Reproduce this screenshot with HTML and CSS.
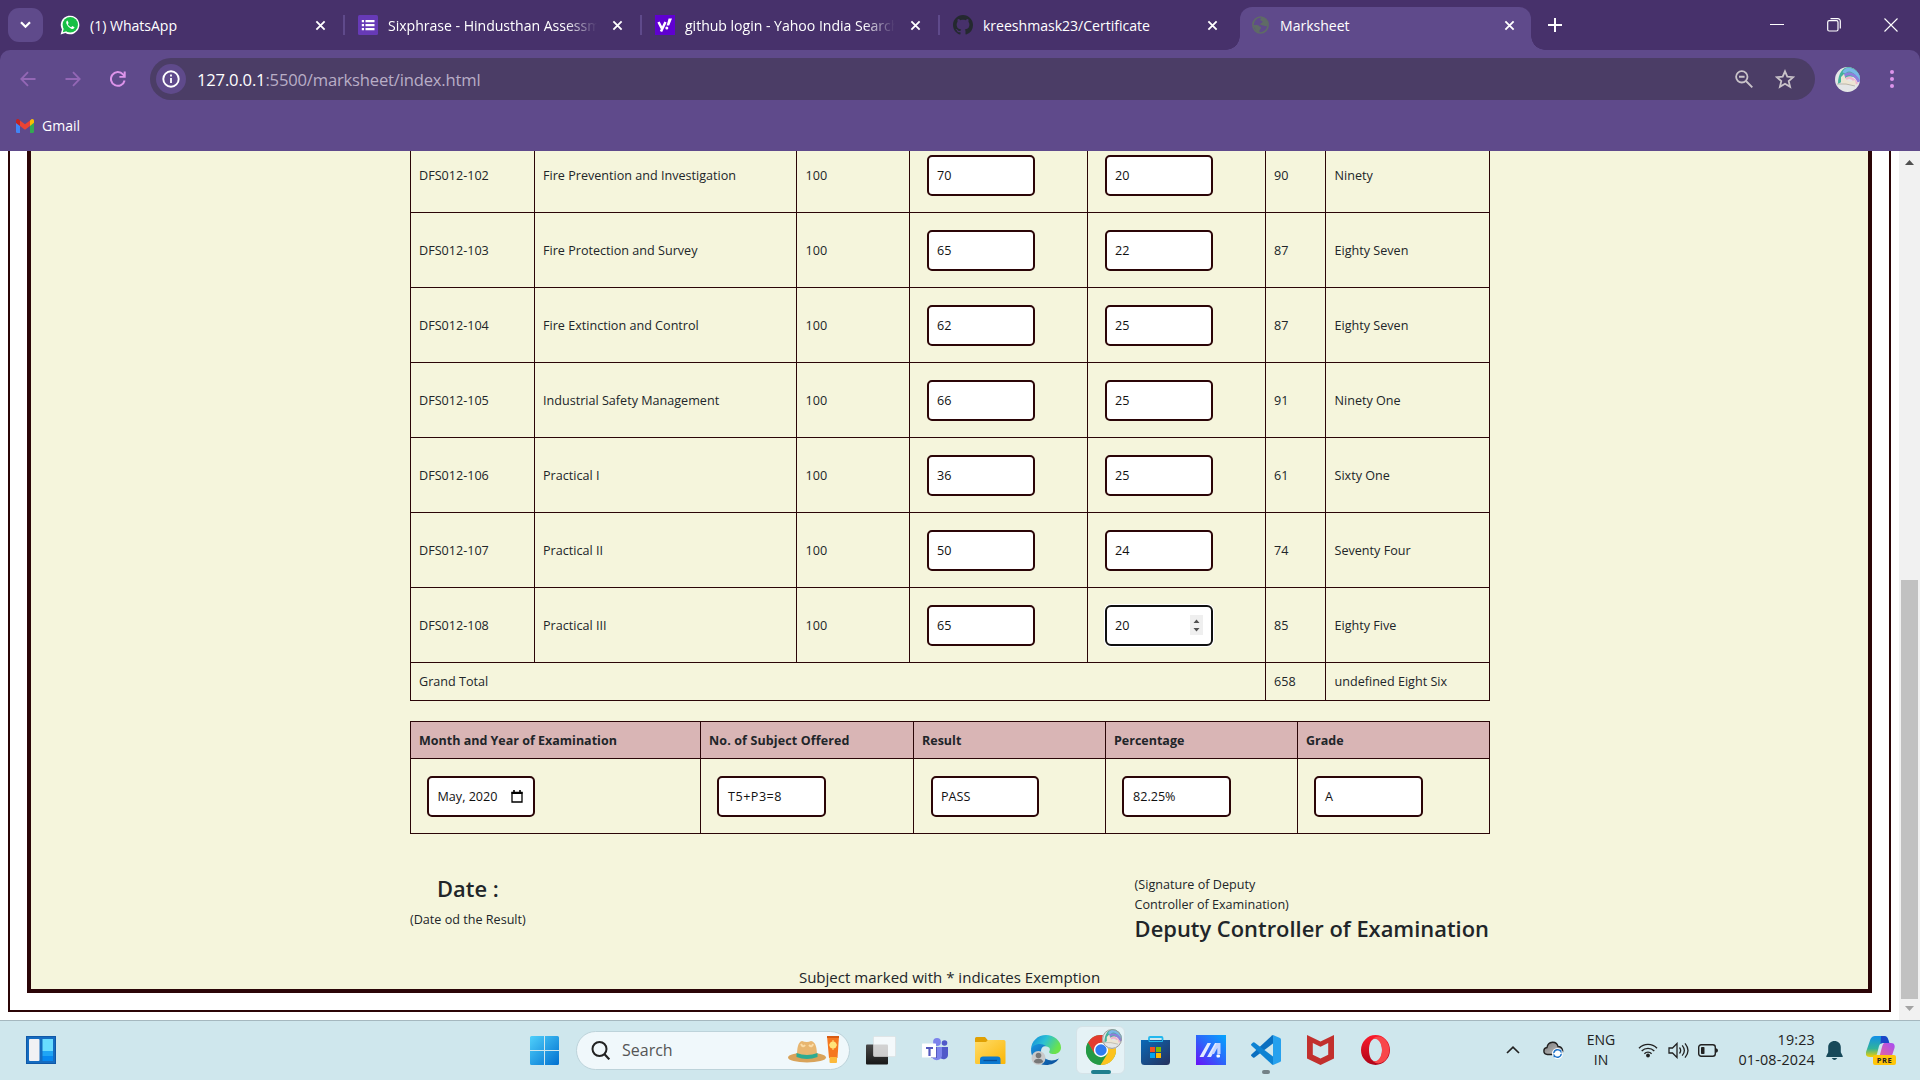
FILE: index.html
```html
<!DOCTYPE html>
<html lang="en">
<head>
<meta charset="utf-8">
<title>Marksheet</title>
<link rel="stylesheet" href="styles.css">
</head>
<body>
<svg width="0" height="0" class="defs" aria-hidden="true">
  <defs>
    <symbol id="close" viewBox="0 0 12 12"><path d="M1.5 1.5l9 9M10.5 1.5l-9 9" stroke="#fff" stroke-width="2" fill="none"/></symbol>
    <clipPath id="round"><circle cx="12.5" cy="12.5" r="12.5"/></clipPath>
    <symbol id="avatar" viewBox="0 0 25 25">
      <g clip-path="url(#round)">
        <rect width="25" height="25" fill="#e4e6e6"/>
        <path d="M3 17C3 6 8 0 14 0h11v14C19 9 13 7 8 14z" fill="#45b29b"/>
        <path d="M9 6C12 0 20 2 26 13" stroke="#79b6e8" stroke-width="3.500" fill="none"/>
        <path d="M9 9c5-5 12-1 15 6" stroke="#8f7ddc" stroke-width="3" fill="none"/>
        <path d="M11 12c4-3 8 0 11 5" stroke="#efb4cc" stroke-width="2.500" fill="none"/>
        <path d="M6 10l3-3 2 6 4 2 5-2 1 5H9l-3-3z" fill="#ece5d2"/>
        <path d="M2 17l9 0 9 2" stroke="#b9b6ad" fill="none"/>
      </g>
    </symbol>
    <linearGradient id="gWin" x1="0" y1="0" x2="1" y2="1"><stop offset="0" stop-color="#4fd0fb"/><stop offset="1" stop-color="#0070d0"/></linearGradient>
    <linearGradient id="gFold" x1="0" y1="0" x2="1" y2="1"><stop offset="0" stop-color="#ffdc69"/><stop offset="1" stop-color="#fbb606"/></linearGradient>
    <linearGradient id="gEdge" x1="0" y1="0" x2="1" y2=".4"><stop offset="0" stop-color="#1187dc"/><stop offset=".5" stop-color="#2bc0d4"/><stop offset="1" stop-color="#6be34b"/></linearGradient>
    <linearGradient id="gEdge2" x1="0" y1="0" x2="1" y2="1"><stop offset="0" stop-color="#1793e0"/><stop offset="1" stop-color="#0b4b96"/></linearGradient>
    <linearGradient id="gStore" x1="0" y1="0" x2="1" y2="1"><stop offset="0" stop-color="#0a69b8"/><stop offset="1" stop-color="#26315c"/></linearGradient>
    <linearGradient id="gAsus" x1="0" y1="1" x2="1" y2="0"><stop offset="0" stop-color="#6a0ff8"/><stop offset=".5" stop-color="#2c66fb"/><stop offset="1" stop-color="#05a6fd"/></linearGradient>
    <linearGradient id="gOpera" x1="0" y1="0" x2="0" y2="1"><stop offset="0" stop-color="#fb1b2d"/><stop offset="1" stop-color="#ad0418"/></linearGradient>
    <linearGradient id="gTask" x1="0" y1="0" x2="0" y2="1"><stop offset="0" stop-color="#484848"/><stop offset="1" stop-color="#181818"/></linearGradient>
    <linearGradient id="gPilotA" x1="0" y1="0" x2="0" y2="1"><stop offset="0" stop-color="#118fe8"/><stop offset=".6" stop-color="#31b39b"/><stop offset="1" stop-color="#f4d000"/></linearGradient>
    <linearGradient id="gPilotB" x1="1" y1="0" x2="0" y2="1"><stop offset="0" stop-color="#a64df5"/><stop offset="1" stop-color="#fb6b80"/></linearGradient>
    <linearGradient id="gCloud" x1="0" y1="0" x2="1" y2="1"><stop offset="0" stop-color="#777"/><stop offset="1" stop-color="#c9c9c9"/></linearGradient>
  </defs>
</svg>

<header class="browser">
  <div class="tabstrip">
    <div class="tab-search"><button class="tab-search-btn" aria-label="Search tabs"><svg width="11" height="8" viewBox="0 0 11 8"><path d="M1 1.2l4.5 4.6L10 1.2" stroke="#fff" stroke-width="2.2" fill="none"/></svg></button></div>
    <div class="tab">
      <svg width="20" height="20" viewBox="0 0 20 20"><path d="M.6 19.4L2 14.6A9.3 9.3 0 1 1 5.4 18z" fill="#fff"/><circle cx="10.3" cy="9.7" r="7.7" fill="#17bf45"/><path d="M2.8 17.2l1-3.6 2.6 2.6z" fill="#17bf45"/><path d="M7.4 5.4c-1.2.6-1.5 2-.8 3.7.9 2.300 2.900 4.100 5.100 4.800 1.300.4 2.600-.2 2.800-1.600l-2.200-1.200-1.100 1.200c-1.600-.6-2.600-1.600-3.400-3l.8-1.200z" fill="#fff"/></svg>
      <span class="tab-title">(1) WhatsApp</span>
      <svg class="x" width="11" height="11"><use href="#close"/></svg>
    </div>
    <div class="tab">
      <svg width="20" height="20" viewBox="0 0 20 20"><rect width="20" height="20" rx="1.500" fill="#673ab7"/><path d="M7.500 5h9v2.200h-9zM7.500 9h9v2.200h-9zM7.500 13h9v2.200h-9zM3.800 5H6v2.200H3.800zM3.800 9H6v2.200H3.800zM3.800 13H6v2.200H3.800z" fill="#fff"/></svg>
      <span class="tab-title fade">Sixphrase - Hindusthan Assessment</span>
      <svg class="x" width="11" height="11"><use href="#close"/></svg>
    </div>
    <div class="tab">
      <svg width="20" height="20" viewBox="0 0 20 20"><rect width="20" height="20" fill="#5f01d1"/><path d="M3.500 7l3.200 6.200M10.500 7L6 16.500" stroke="#fff" stroke-width="2.500" fill="none"/><path d="M13.600 3.500H17l-2.800 7h-2.600z" fill="#fff"/><circle cx="11.800" cy="12.900" r="1.500" fill="#fff"/></svg>
      <span class="tab-title fade">github login - Yahoo India Search</span>
      <svg class="x" width="11" height="11"><use href="#close"/></svg>
    </div>
    <div class="tab tab-github">
      <svg width="20" height="20" viewBox="0 0 16 16"><path fill="#24292f" d="M8 0C3.580 0 0 3.580 0 8c0 3.540 2.290 6.530 5.470 7.590.4.070.55-.17.55-.38 0-.19-.01-.82-.01-1.490-2.010.37-2.530-.49-2.690-.94-.09-.23-.48-.94-.82-1.130-.28-.15-.68-.52-.01-.53.63-.01 1.080.58 1.230.82.72 1.210 1.870.87 2.330.66.07-.52.28-.87.51-1.070-1.780-.2-3.640-.89-3.640-3.950 0-.87.31-1.590.82-2.150-.08-.2-.36-1.020.08-2.120 0 0 .67-.21 2.200.82.64-.18 1.320-.27 2-.27s1.360.09 2 .27c1.530-1.040 2.200-.82 2.200-.82.44 1.100.16 1.920.08 2.120.51.56.82 1.270.82 2.150 0 3.070-1.870 3.750-3.650 3.950.29.25.54.73.54 1.480 0 1.070-.01 1.930-.01 2.200 0 .21.15.46.55.38A8.010 8.010 0 0 0 16 8c0-4.420-3.580-8-8-8z"/></svg>
      <span class="tab-title">kreeshmask23/Certificate</span>
      <svg class="x" width="11" height="11"><use href="#close"/></svg>
    </div>
    <div class="tab tab-active">
      <svg width="17" height="18" viewBox="0 0 17 18"><ellipse cx="8.500" cy="9" rx="7.600" ry="8" fill="none" stroke="#5f6b66" stroke-width="1.700"/><path d="M10 1.500c-2.300 1-2.200 3.300 0 3.500 1.300.2.300 2-1 2.300-1.500.4-.6 1.900 1 1.900 2 0 3 1.500 5.500.8l.6-3.500L13 2.500zM1 9h4c2 0 2.200 1.900 4 2 .5 2-2 2.200-1.500 5.500l-3-1z" fill="#5f6b66"/></svg>
      <span class="tab-title">Marksheet</span>
      <svg class="x" width="11" height="11"><use href="#close"/></svg>
    </div>
    <div class="strip-end">
      <svg width="14" height="14" viewBox="0 0 14 14"><path d="M7 0v14M0 7h14" stroke="#fff" stroke-width="2"/></svg>
      <div class="window-controls">
        <svg width="14" height="14" viewBox="0 0 14 14"><path d="M0 6.500h14" stroke="#fff"/></svg>
        <svg width="14" height="14" viewBox="0 0 14 14"><rect x=".7" y="2.700" width="10.300" height="10.300" rx="1.500" fill="none" stroke="#fff" stroke-width="1.200"/><path d="M3.500.700h7.300a2.500 2.500 0 0 1 2.500 2.500v7.300" fill="none" stroke="#fff" stroke-width="1.200"/></svg>
        <svg width="14" height="14" viewBox="0 0 14 14"><path d="M.5.500l13 13M13.500.500l-13 13" stroke="#fff" stroke-width="1.100"/></svg>
      </div>
    </div>
  </div>

  <div class="toolbar">
    <div class="nav">
      <svg width="16" height="16" viewBox="0 0 16 16"><path d="M15.500 8H1.500M8 1.200L1.300 8 8 14.800" fill="none" stroke="#9367b5" stroke-width="1.800"/></svg>
      <svg width="16" height="16" viewBox="0 0 16 16"><path d="M.5 8h14M8 1.200L14.700 8 8 14.800" fill="none" stroke="#9367b5" stroke-width="1.800"/></svg>
      <svg width="16" height="16" viewBox="0 0 16 16"><path d="M14.600 9.500A6.900 6.900 0 1 1 13 3.300l1.500 1.700" fill="none" stroke="#dd94ea" stroke-width="2"/><path d="M15.700.500v6.300H9.400V4.900h4.300V.500z" fill="#dd94ea"/></svg>
    </div>
    <div class="omnibox">
      <span class="site-info"><svg width="18" height="18" viewBox="0 0 18 18"><circle cx="9" cy="9" r="7.700" fill="none" stroke="#fff" stroke-width="1.900"/><path d="M9 8v5M9 4.600v1.800" stroke="#fff" stroke-width="1.800"/></svg></span>
      <span class="url"><b>127.0.0.1</b>:5500/marksheet/index.html</span>
      <svg width="18" height="18" viewBox="0 0 18 18"><circle cx="6.800" cy="6.800" r="5.700" fill="none" stroke="#c9c3c9" stroke-width="1.800"/><path d="M4 6.800h5.600M11 11l6.300 6.300" stroke="#c9c3c9" stroke-width="1.900"/></svg>
      <svg width="20" height="20" viewBox="0 0 20 20"><path d="M10 2.300l2.300 5.400 5.900.5-4.500 3.900 1.400 5.700L10 14.800l-5.100 3 1.400-5.700-4.500-3.900 5.900-.5z" fill="none" stroke="#c9c3c9" stroke-width="1.800"/></svg>
    </div>
    <svg class="profile" width="25" height="25"><use href="#avatar"/></svg>
    <svg width="4" height="18" viewBox="0 0 4 18"><circle cx="2" cy="2" r="2" fill="#dd94ea"/><circle cx="2" cy="9" r="2" fill="#dd94ea"/><circle cx="2" cy="16" r="2" fill="#dd94ea"/></svg>
  </div>

  <div class="bookmarks">
    <svg width="18" height="14" viewBox="0 0 18 14"><path d="M0 3.500l4 3V14H1.200A1.200 1.200 0 0 1 0 12.800z" fill="#4285f4"/><path d="M18 3.500l-4 3V14h2.800a1.200 1.200 0 0 0 1.200-1.200z" fill="#34a853"/><path d="M14 1.400L15.200.400C16.400-.5 18 .3 18 1.800v2L14 7z" fill="#fbbc04"/><path d="M4 1.400l5 3.800 5-3.800V7L9 10.700 4 7z" fill="#ea4335"/><path d="M0 1.800C0 .3 1.600-.5 2.800.400L4 1.400V7L0 3.900z" fill="#c5221f"/></svg>
    <span>Gmail</span>
  </div>
</header>

<main class="viewport">
  <div class="page">
    <div class="sheet">
      <table class="marks">
        <colgroup><col class="c-code"><col class="c-subject"><col class="c-max"><col class="c-mark"><col class="c-mark"><col class="c-total"><col class="c-words"></colgroup>
        <tbody>
          <tr><td>DFS012-102</td><td>Fire Prevention and Investigation</td><td>100</td><td><span class="field">70</span></td><td><span class="field">20</span></td><td>90</td><td>Ninety</td></tr>
          <tr><td>DFS012-103</td><td>Fire Protection and Survey</td><td>100</td><td><span class="field">65</span></td><td><span class="field">22</span></td><td>87</td><td>Eighty Seven</td></tr>
          <tr><td>DFS012-104</td><td>Fire Extinction and Control</td><td>100</td><td><span class="field">62</span></td><td><span class="field">25</span></td><td>87</td><td>Eighty Seven</td></tr>
          <tr><td>DFS012-105</td><td>Industrial Safety Management</td><td>100</td><td><span class="field">66</span></td><td><span class="field">25</span></td><td>91</td><td>Ninety One</td></tr>
          <tr><td>DFS012-106</td><td>Practical I</td><td>100</td><td><span class="field">36</span></td><td><span class="field">25</span></td><td>61</td><td>Sixty One</td></tr>
          <tr><td>DFS012-107</td><td>Practical II</td><td>100</td><td><span class="field">50</span></td><td><span class="field">24</span></td><td>74</td><td>Seventy Four</td></tr>
          <tr><td>DFS012-108</td><td>Practical III</td><td>100</td><td><span class="field">65</span></td><td><span class="field focused">20<svg width="13" height="20" viewBox="0 0 13 20"><rect width="13" height="20" fill="#efefef"/><path d="M3.500 8l3-3.500 3 3.500zM3.500 13l3 3.500 3-3.500z" fill="#505050"/></svg></span></td><td>85</td><td>Eighty Five</td></tr>
          <tr class="grand"><td colspan="5">Grand Total</td><td>658</td><td>undefined Eight Six</td></tr>
        </tbody>
      </table>

      <table class="summary">
        <colgroup><col class="s-month"><col class="s-count"><col class="s-rest"><col class="s-rest"><col class="s-rest"></colgroup>
        <thead><tr><th>Month and Year of Examination</th><th class="spaced">No. of Subject Offered</th><th>Result</th><th>Percentage</th><th>Grade</th></tr></thead>
        <tbody>
          <tr>
            <td><span class="field month">May, 2020<svg width="12" height="13" viewBox="0 0 12 13"><path d="M1 2.500h10V12H1z" fill="none" stroke="#000" stroke-width="1.300"/><path d="M.5 2h11v2H.5zM2.200 0h1.600v2H2.200zM8.200 0h1.600v2H8.200z"/></svg></span></td>
            <td><span class="field code">T5+P3=8</span></td><td><span class="field result">PASS</span></td><td><span class="field">82.25%</span></td><td><span class="field">A</span></td>
          </tr>
        </tbody>
      </table>

      <div class="signatures">
        <div class="sign-date"><h4>Date :</h4><p>(Date od the Result)</p></div>
        <div class="sign-deputy"><p>(Signature of Deputy<br>Controller of Examination)</p><h4>Deputy Controller of Examination</h4></div>
      </div>
      <p class="exemption">Subject marked with * indicates Exemption</p>
    </div>
  </div>
  <div class="scrollbar">
    <svg width="9" height="5" viewBox="0 0 9 5"><path d="M0 5L4.500 0 9 5z" fill="#505050"/></svg>
    <div class="thumb"></div>
    <svg width="9" height="5" viewBox="0 0 9 5"><path d="M0 0l4.500 5L9 0z" fill="#a3a3a3"/></svg>
  </div>
</main>

<footer class="taskbar">
  <svg class="widgets" width="30" height="28" viewBox="0 0 30 28"><rect width="30" height="28" fill="#0e58a8"/><rect x="1" y="1" width="28" height="26" fill="#156cc0"/><rect x="3" y="3" width="10.500" height="22" rx="1" fill="#f1f1f4"/><rect x="16.500" y="3" width="10.500" height="12" fill="#69dcff"/><rect x="16.500" y="15" width="10.500" height="5" fill="#1fa5f5"/><rect x="16.500" y="20" width="10.500" height="5" fill="#0788ef"/></svg>

  <div class="apps">
    <svg class="start" width="29" height="29" viewBox="0 0 29 29"><path d="M1.500 0H14v14H0V1.500A1.500 1.500 0 0 1 1.500 0zM15 0h12.500A1.500 1.500 0 0 1 29 1.500V14H15zM0 15h14v14H1.500A1.500 1.500 0 0 1 0 27.500zM15 15h14v12.500a1.500 1.500 0 0 1-1.500 1.500H15z" fill="url(#gWin)"/></svg>
    <div class="search">
      <svg width="19" height="19" viewBox="0 0 19 19"><circle cx="8.500" cy="8" r="7" fill="none" stroke="#222" stroke-width="2"/><path d="M13.300 13l5 5.300" stroke="#222" stroke-width="2.200"/></svg>
      <span>Search</span>
      <svg width="52" height="28" viewBox="0 0 52 28">
        <ellipse cx="19" cy="21.500" rx="19" ry="5" fill="#d9a35a"/><path d="M9 20c0-8 1-14 5-15q5 2 9 0c5 1 6 7 6 15q-10 4-20 0z" fill="#e8b670"/><path d="M13 8q2 4 4 1M21 9q3 3 4-1" stroke="#fbdca6" stroke-width="2" fill="none"/><path d="M8.500 17q10.500 4 21 0v4q-10.500 4-21 0z" fill="#2cab92"/>
        <path d="M39 0h12l-1.500 22h-8.500z" fill="#f5771f"/><path d="M39 0h12v2H39z" fill="#d85b12"/><rect x="41.500" y="21" width="7.500" height="6" rx="1" fill="#fcb93a"/><circle cx="45" cy="9" r="3.500" fill="#ffe37a"/><path d="M45 4v10M41 9h8" stroke="#ffe37a" stroke-width="1"/>
      </svg>
    </div>
    <span class="app"><svg width="30" height="29" viewBox="0 0 30 29"><rect x="0" y="8.500" width="22" height="20" rx="1" fill="url(#gTask)"/><rect x="7.500" y=".5" width="22" height="20" rx="1" fill="#fff" fill-opacity=".76" stroke="#ddd" stroke-width=".6"/></svg></span>
    <span class="app"><svg width="27" height="24" viewBox="0 0 27 24"><circle cx="15" cy="4" r="3.900" fill="#7b83eb"/><circle cx="22.500" cy="5" r="2.800" fill="#5059c9"/><path d="M18 9h8v7.500a4.500 4.500 0 0 1-8 3z" fill="#5059c9"/><path d="M9.500 9H20v9a5.400 5.400 0 0 1-10.500 0z" fill="#7b83eb"/><path d="M9 9h6v11H9z" fill="#545abf"/><rect y="5.500" width="14" height="14" rx=".6" fill="#fff"/><path d="M4 9h7v2H8.600v7H6.400v-7H4z" fill="#5359be"/></svg></span>
    <span class="app"><svg width="31" height="28" viewBox="0 0 31 28"><path d="M0 2.500A1.500 1.500 0 0 1 1.500 1H10l3 3.500H29V12H0z" fill="#e0a003"/><path d="M0 6h11l2-2h16a2 2 0 0 1 1.500 1.500V27a1 1 0 0 1-1 1h-28A1.500 1.500 0 0 1 0 26.500z" fill="url(#gFold)"/><path d="M5 28v-4.500a3 3 0 0 1 3-3h14.500a3 3 0 0 1 3 3V28z" fill="#0b79d0"/><path d="M8.500 24.500h13.500" stroke="#074e97" stroke-width="1.300"/></svg></span>
    <span class="app"><svg width="30" height="30" viewBox="0 0 30 30"><path d="M0 15C0 6 7 0 15 0s15 6 15 12.500c0 4-3 6.500-7 6.500-4.500 0-5.500-1.500-4.500-3 1-2 .2-4-3-4.500C9 10.500 3 11 0 15z" fill="url(#gEdge)"/><path d="M0 15c1-6 10-8 15-4-5 0-6 5-4 9 3 5.500 10 7 17 3.500C25 28 20 30 15 30 6 30 0 23 0 15z" fill="url(#gEdge2)"/><circle cx="7.500" cy="23" r="7" fill="#c9cacb"/><circle cx="7.500" cy="20.500" r="2.800" fill="#777"/><path d="M2.800 27c0-4.500 9.400-4.500 9.400 0q-4.700 3-9.400 0z" fill="#777"/></svg></span>
    <span class="app running"><svg width="30" height="30" viewBox="0 0 30 30"><circle cx="15" cy="15" r="15" fill="#4caf50"/><path d="M2 7.500A15 15 0 0 0 15 30l6.500-11.200L15 15l-6.500 3.800z" fill="#249a46"/><path d="M28 7.500A15 15 0 0 1 14.500 30l7-11.200L22 8z" fill="#fcc31e"/><path d="M15 7.500h13A15 15 0 0 0 2 7.500l6.500 11z" fill="#e33b2e"/><circle cx="15" cy="15" r="7.200" fill="#fff"/><circle cx="15" cy="15" r="5.700" fill="#2f7cf0"/></svg><svg class="badge" width="20" height="20" viewBox="0 0 20 20"><use href="#avatar" width="20" height="20"/><circle cx="10" cy="10" r="9.400" fill="none" stroke="#999" stroke-width="1"/></svg></span>
    <span class="app"><svg width="29" height="29" viewBox="0 0 29 29"><path d="M8 5V2a1 1 0 0 1 1-1h11.500a1 1 0 0 1 1 1v3" fill="none" stroke="#22b8ee" stroke-width="1.800"/><path d="M0 4h29v21.500a3.500 3.500 0 0 1-3.500 3.500h-22A3.500 3.500 0 0 1 0 25.500z" fill="url(#gStore)"/><path d="M8 4v1.500h13.500V4" fill="none" stroke="#22b8ee" stroke-width="1"/><path d="M9 11h5v5H9z" fill="#f25022"/><path d="M15 11h5v5h-5z" fill="#7fba00"/><path d="M9 17h5v5H9z" fill="#00a4ef"/><path d="M15 17h5v5h-5z" fill="#ffb900"/></svg></span>
    <span class="app"><svg width="30" height="30" viewBox="0 0 30 30"><rect width="30" height="30" fill="url(#gAsus)"/><path d="M3.500 22L11.500 8h3.500L7.500 22zM11 22l8-14h3.500L15 22z" fill="#e3ebff"/><path d="M20.500 8h4v11h-3.200v-6L18 19h-3z" fill="#c4d4ff"/><rect x="20.500" y="19.500" width="3.500" height="3" rx="1" fill="#fff"/></svg></span>
    <span class="app idle"><svg width="30" height="30" viewBox="0 0 30 30"><path d="M22 0l7 3q1 .5 1 1.500v21q0 1-1 1.500l-7 3z" fill="#26a1ee"/><path d="M22 0v8.500L3.500 22.500q-.8.500-1.500 0L.4 21q-.8-.8 0-1.600L21 .5z" fill="#0a6fc0"/><path d="M22 30v-8.500L3.500 7.500q-.8-.5-1.500 0L.4 9q-.8.800 0 1.600L21 29.500z" fill="#0d83d3"/></svg></span>
    <span class="app"><svg width="27" height="30" viewBox="0 0 27 30"><path d="M0 0l13.500 6.500L27 0v23.500L13.500 30 0 23.500z" fill="#c2302d"/><path d="M5.800 8l7.700 3.800L21.200 8v11.700l-7.700 3.800-7.700-3.800z" fill="#cfe7ed"/></svg></span>
    <span class="app"><svg width="29" height="30" viewBox="0 0 29 30"><path fill-rule="evenodd" d="M14.500 0a14.500 15 0 1 0 0 30 14.500 15 0 1 0 0-30zM14.500 3.500c4 0 6.500 5 6.500 11.500s-2.500 11.500-6.500 11.500S8 21.500 8 15 10.500 3.500 14.500 3.500z" fill="url(#gOpera)"/><path d="M11 4.500Q17-1 23.500 4A15 15 0 0 1 23.500 26Q17 31 11 25.500q4 2 7-1.500c4-5 4-13 0-18q-3-3.500-7-1.500z" fill="#f8474a"/></svg></span>
  </div>

  <div class="tray">
    <svg class="t-up" width="14" height="8" viewBox="0 0 14 8"><path d="M1 7l6-5.800L13 7" fill="none" stroke="#222" stroke-width="1.700"/></svg>
    <svg class="t-cloud" width="21" height="18" viewBox="0 0 21 18"><path d="M4.500 13.500C-.5 13 0 7 4 6.500 5 0 13.500-.5 15 5.500c5 0 6 6.500 2.500 8z" fill="url(#gCloud)" stroke="#222" stroke-width="1.400"/><circle cx="14.500" cy="12.500" r="5.500" fill="#fff"/><path d="M10.800 12a3.800 3.800 0 0 1 7-1.500V8.800M18.200 13a3.800 3.800 0 0 1-7 1.500v1.700" fill="none" stroke="#1c72c8" stroke-width="1.400"/></svg>
    <div class="t-lang">ENG<br>IN</div>
    <svg class="t-wifi" width="20" height="16" viewBox="0 0 20 16"><path d="M1 6.200a12.500 12.500 0 0 1 18 0M3.700 9a8.900 8.900 0 0 1 12.600 0M6.400 11.700a5 5 0 0 1 7.200 0" fill="none" stroke="#222" stroke-width="1.400"/><circle cx="10" cy="13.500" r="1.900" fill="#222"/></svg>
    <svg class="t-vol" width="21" height="17" viewBox="0 0 21 17"><path d="M1 6h3.500L9 1.500v14L4.500 11H1z" fill="none" stroke="#222" stroke-width="1.300"/><path d="M11.500 5.500q2.300 3 0 6M14.200 3.300q4.300 5.200 0 10.400M17 1.300q6 7.200 0 14.400" fill="none" stroke="#222" stroke-width="1.300"/></svg>
    <svg class="t-batt" width="20" height="13" viewBox="0 0 20 13"><rect x=".7" y=".7" width="16.600" height="11.600" rx="2.500" fill="none" stroke="#222" stroke-width="1.400"/><rect x="3" y="3" width="3.500" height="7" rx=".8" fill="#222"/><path d="M18 4.200q2 .3 2 2.300t-2 2.300z" fill="#222"/></svg>
    <div class="t-clock">19:23<br>01-08-2024</div>
    <svg class="t-bell" width="17" height="19" viewBox="0 0 17 19"><path d="M8.500 0C5 0 2.200 2.500 2.200 6.200v5L.3 15q-.3 1 .7 1h15q1 0 .7-1l-1.900-3.800v-5C14.800 2.500 12 0 8.500 0zM5.700 17q2.800 3.800 5.600 0z" fill="#17495a"/></svg>
    <div class="t-pilot"><svg width="29" height="28" viewBox="0 0 29 28"><path d="M4.500 3Q6 0 9 0h9q3 0 4 3l1.300 4H17q-3 0-4 3l-2 8q-1 3-4 3H4q-5 0-4-5z" fill="url(#gPilotA)"/><path d="M15 0h3q3 0 4 3l1.300 4H17q-1.500 0-2.500 1z" fill="#1b46c8"/><path d="M18.500 7H25q4.500 0 3.500 5l-3 9q-1 4-5 4H8.500q3.500 0 4.700-3.500L16 11q1-4 2.500-4z" fill="url(#gPilotB)"/></svg><span>PRE</span></div>
  </div>
</footer>
</body>
</html>
```

FILE: styles.css
```css
* { box-sizing: border-box; }

body {
  margin: 0;
  width: 1920px;
  height: 1080px;
  overflow: hidden;
  display: flex;
  flex-direction: column;
  font-family: "Open Sans", "Noto Sans", sans-serif;
  color: #212529;
  background: #fff;
}

svg { display: block; flex: none; }
.defs { position: absolute; }
h4, p { margin: 0; }

/* Browser frame */
.browser { height: 151px; flex: none; background: #47316b; color: #fff; }

.tabstrip {
  height: 50px;
  display: grid;
  grid-template-columns: 46px 298px 297px 298px 301px 291px 1fr;
}
.tab-search { padding: 8px 0 0 8px; }
.tab-search-btn {
  width: 35px;
  height: 34px;
  padding: 0;
  border: 0;
  border-radius: 11px;
  background: #5f4a8b;
  display: flex;
  align-items: center;
  justify-content: center;
}
.tab {
  display: flex;
  align-items: center;
  padding: 0 18px 0 14px;
  position: relative;
  font-size: 14.1px;
  letter-spacing: -0.03px;
}
.tab:nth-child(-n+4)::after {
  content: "";
  position: absolute;
  right: -1px;
  top: 15px;
  width: 2px;
  height: 20px;
  background: #5f4a8b;
}
.tab-github { padding-right: 22px; }
.tab-title {
  flex: 1;
  margin: 0 16px 0 10px;
  overflow: hidden;
  white-space: nowrap;
}
.tab-title.fade { margin-right: 15px; mask-image: linear-gradient(to right, #000 85%, transparent); }
.tab-active {
  margin-top: 7px;
  padding: 0 16px 7px 12px;
  height: 43px;
  border-radius: 12px 12px 0 0;
  background: #5f4a8b;
}
.tab-active .tab-title { margin-left: 11px; }
.tab-active::before, .tab-active::after {
  content: "";
  position: absolute;
  bottom: 0;
  width: 14px;
  height: 14px;
}
.tab-active::before { left: -14px; background: radial-gradient(circle at 0 0, transparent 13.5px, #5f4a8b 14px); }
.tab-active::after { right: -14px; background: radial-gradient(circle at 100% 0, transparent 13.5px, #5f4a8b 14px); }

.strip-end {
  display: flex;
  justify-content: space-between;
  align-items: center;
  padding: 0 22px 0 17px;
}
.window-controls { display: flex; gap: 43px; }

.toolbar {
  height: 58px;
  display: flex;
  align-items: center;
  padding: 0 26px 0 20px;
  border-radius: 10px 10px 0 0;
  background: #5f4a8b;
}
.nav { display: flex; flex: none; gap: 29px; width: 130px; }
.omnibox {
  width: 1665px;
  height: 42px;
  display: flex;
  align-items: center;
  padding: 0 20px 0 6px;
  border-radius: 21px;
  background: #4b3d66;
}
.site-info {
  width: 30px;
  height: 30px;
  border-radius: 50%;
  background: #5f4a8b;
  display: flex;
  align-items: center;
  justify-content: center;
}
.url { flex: 1; margin-left: 11px; font-size: 16.6px; letter-spacing: -0.18px; color: #b9aec6; }
.url b { font-weight: 400; color: #fff; }
.omnibox > svg:last-child { margin-left: 22px; }
.profile { margin: 0 30px 0 20px; }

.bookmarks {
  height: 43px;
  padding: 0 0 8px 16px;
  display: flex;
  align-items: center;
  gap: 8px;
  font-size: 14px;
  background: #5f4a8b;
}

/* Page content */
.viewport { height: 869px; flex: none; display: flex; overflow: hidden; }
.page {
  width: 1883px;
  height: 861px;
  margin: 0 8px;
  padding: 0 17px 17px;
  border: 2px solid #2b0507;
  border-top: 0;
  background: #fff;
}
.sheet {
  height: 842px;
  border: 4px solid #2b0507;
  border-top: 0;
  background: #f5f5dc;
  padding-left: 379px;
  overflow: hidden;
}

table {
  width: 1080px;
  border-collapse: collapse;
  table-layout: fixed;
  font-size: 12.6px;
  line-height: 20px;
}
td, th { border: 1px solid #2b0507; padding: 2px 8px 0; text-align: left; vertical-align: middle; }
.marks { margin-top: -14px; }
.marks tr { height: 75px; }
.marks .grand { height: 38px; }
.marks .grand td { padding-top: 0; }
.marks td:nth-child(3), .marks td:last-child { padding-left: 8.5px; }
.c-code { width: 124px; }
.c-subject { width: 262px; }
.c-max { width: 113px; }
.c-mark { width: 178px; }
.c-total { width: 60px; }
.c-words { width: 164px; }

.summary { margin-top: 20px; }
.summary thead tr { height: 37px; }
.summary tbody tr { height: 75px; }
.summary th { background: #d9b5b5; font-size: 12.5px; }
.summary th.spaced { letter-spacing: 0.12px; }
.s-month { width: 290px; }
.s-count { width: 213px; }
.s-rest { width: 192px; }

.field {
  display: flex;
  align-items: center;
  justify-content: space-between;
  width: 109px;
  height: 41px;
  margin: -2px 0 0 8px;
  padding: 2px 10px 0 9px;
  border: 2px solid #2b0507;
  border-radius: 5px;
  background: #fff;
  color: #111;
}
.field svg { margin-top: -2px; }
.marks .field { width: 108px; margin-left: 9px; padding-left: 8px; }
.field.month { width: 108px; padding-left: 8.5px; }
.field.code { letter-spacing: 0.5px; }
.field.result { width: 108px; margin-left: 9px; padding-left: 8px; }
.marks .field.focused { border-color: #101010; border-radius: 6px; box-shadow: 0 0 0 1px #fff; padding-right: 8px; }

.signatures {
  width: 1079px;
  margin-top: 41px;
  display: flex;
  justify-content: space-between;
  font-size: 12.6px;
  line-height: 20px;
}
.signatures h4 { font-size: 21.9px; line-height: 29px; font-weight: 600; }
.sign-date { text-align: center; }
.sign-date h4 { margin-top: -1px; }
.sign-date p { margin-top: 7px; }
.sign-deputy h4 { margin-top: -1px; }
.exemption { width: 1079px; margin-top: 22px; line-height: 24px; font-size: 15.05px; text-align: center; }

.scrollbar {
  width: 21px;
  display: flex;
  flex-direction: column;
  align-items: center;
  padding: 9px 0;
  background: #f1f1f1;
}
.thumb { width: 17px; height: 419px; margin: auto 0 7px; background: #c1c1c1; }

/* Taskbar */
.taskbar {
  height: 60px;
  flex: none;
  display: flex;
  align-items: center;
  padding-bottom: 1px;
  border-top: 1px solid #a5b8bf;
  background: #cfe7ed;
  color: #222;
}
.widgets { margin-left: 26px; }
.apps { display: flex; align-items: center; margin-left: 474px; }
.search {
  width: 274px;
  height: 39px;
  margin: 0 3px 0 17px;
  padding: 0 9px 0 14px;
  display: flex;
  align-items: center;
  border: 1px solid #bdd3da;
  border-radius: 20px;
  background: #f0f8fb;
  font-size: 16px;
  color: #555;
}
.search span { flex: 1; margin-left: 12px; }
.app {
  position: relative;
  width: 55px;
  height: 48px;
  display: flex;
  align-items: center;
  justify-content: center;
}
.running { width: 49px; margin: 0 3px; border: 1px solid #d5e3e8; border-radius: 6px; background: #e5f2f6; }
.running::after, .idle::after {
  content: "";
  position: absolute;
  bottom: -1px;
  width: 20px;
  height: 4px;
  border-radius: 2px;
  background: #1f7f8e;
}
.idle::after { width: 8px; background: #738187; bottom: 0; }
.badge { position: absolute; right: 2px; top: 2px; }

.tray { margin-left: 103px; display: flex; align-items: center; font-size: 14px; line-height: 20px; }
.t-cloud { margin-left: 23px; }
.t-lang { width: 40px; margin-left: 17px; text-align: center; }
.t-wifi { margin-left: 17px; }
.t-vol { margin-left: 10px; }
.t-batt { margin-left: 9px; }
.t-clock { width: 97px; text-align: right; font-size: 14.3px; letter-spacing: 0.2px; }
.t-bell { margin-left: 11px; }
.t-pilot { position: relative; margin-left: 23px; }
.t-pilot span {
  position: absolute;
  left: 7px;
  top: 19px;
  width: 23px;
  height: 10px;
  border-radius: 2px;
  background: #ffc60a;
  font-size: 7.5px;
  line-height: 10px;
  font-weight: 700;
  letter-spacing: 0.6px;
  text-align: center;
}
```
